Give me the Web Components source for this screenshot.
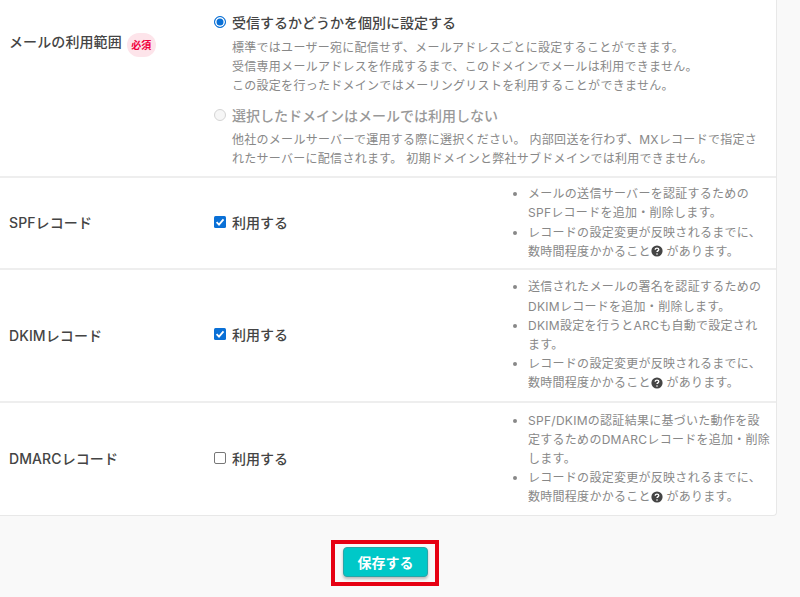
<!DOCTYPE html>
<html lang="ja">
<head>
<meta charset="utf-8">
<title>ドメイン設定</title>
<style>
  html, body { margin: 0; height: 597px; overflow: hidden; }
  body {
    background: #f9f9f9;
    font-family: Inter, "Noto Sans CJK JP", sans-serif;
    color: #444;
  }
</style>
</head>
<body>
<setting-card>
  <setting-row style="--row-height:178px" align="top">
    <span slot="label">メールの利用範囲<required-badge></required-badge></span>
    <div slot="control">
      <radio-option checked label="受信するかどうかを個別に設定する">
        標準ではユーザー宛に配信せず、メールアドレスごとに設定することができます。<br>受信専用メールアドレスを作成するまで、このドメインでメールは利用できません。<br>この設定を行ったドメインではメーリングリストを利用することができません。
      </radio-option>
      <radio-option disabled label="選択したドメインはメールでは利用しない">
        他社のメールサーバーで運用する際に選択ください。 内部回送を行わず、MXレコードで指定さ<br>れたサーバーに配信されます。 初期ドメインと弊社サブドメインでは利用できません。
      </radio-option>
    </div>
  </setting-row>
  <setting-row style="--row-height:92px">
    <span slot="label">SPFレコード</span>
    <check-option slot="control" checked>利用する</check-option>
    <note-list slot="notes">
      <li>メールの送信サーバーを認証するための<br>SPFレコードを追加・削除します。</li>
      <li>レコードの設定変更が反映されるまでに、<br>数時間程度かかること<help-icon></help-icon> があります。</li>
    </note-list>
  </setting-row>
  <setting-row style="--row-height:133px">
    <span slot="label">DKIMレコード</span>
    <check-option slot="control" checked>利用する</check-option>
    <note-list slot="notes">
      <li>送信されたメールの署名を認証するための<br>DKIMレコードを追加・削除します。</li>
      <li>DKIM設定を行うとARCも自動で設定され<br>ます。</li>
      <li>レコードの設定変更が反映されるまでに、<br>数時間程度かかること<help-icon></help-icon> があります。</li>
    </note-list>
  </setting-row>
  <setting-row style="--row-height:112px" last>
    <span slot="label">DMARCレコード</span>
    <check-option slot="control">利用する</check-option>
    <note-list slot="notes">
      <li>SPF/DKIMの認証結果に基づいた動作を設<br>定するためのDMARCレコードを追加・削除<br>します。</li>
      <li>レコードの設定変更が反映されるまでに、<br>数時間程度かかること<help-icon></help-icon> があります。</li>
    </note-list>
  </setting-row>
</setting-card>
<save-bar>保存する</save-bar>

<script>
  class SettingCard extends HTMLElement {
    constructor() {
      super();
      this.attachShadow({mode: 'open'});
      this.shadowRoot.innerHTML = `
        <style>
          :host { display: block; margin-right: 23px; }
          div {
            background: #fff;
            border-right: 1px solid #e8e8e8;
            border-bottom: 1px solid #e8e8e8;
            border-bottom-right-radius: 4px;
          }
        </style>
        <div><slot></slot></div>`;
    }
  }

  class SettingRow extends HTMLElement {
    constructor() {
      super();
      this.attachShadow({mode: 'open'});
      this.shadowRoot.innerHTML = `
        <style>
          :host {
            display: grid;
            grid-template-columns: 205px 1fr 267px;
            box-sizing: border-box;
            height: var(--row-height);
            border-bottom: 2px solid #eee;
            padding-left: 9px;
            align-items: center;
          }
          :host([last]) { border-bottom: 0; }
          .label {
            font-size: 14px;
            font-weight: 500;
            letter-spacing: .1px;
            color: #444;
            white-space: nowrap;
            margin-top: -2px;
          }
          .control { font-size: 14px; margin-top: -3px; }
          :host([align="top"]) .control {
            grid-column: 2 / 4;
            align-self: start;
            margin-top: 0;
            padding-top: 11px;
          }
          :host([align="top"]) .label { align-self: start; margin-top: 31px; }
          .notes { margin-top: -1px; white-space: nowrap; }
        </style>
        <div class="label"><slot name="label"></slot></div>
        <div class="control"><slot name="control"></slot></div>
        <div class="notes"><slot name="notes"></slot></div>`;
    }
  }

  class RequiredBadge extends HTMLElement {
    constructor() {
      super();
      this.attachShadow({mode: 'open'});
      this.shadowRoot.innerHTML = `
        <style>
          :host {
            display: inline-flex;
            align-items: center;
            justify-content: center;
            width: 29px;
            height: 24px;
            margin-left: 5px;
            vertical-align: -2px;
            border-radius: 12px;
            background: #fde4ea;
            color: #f0003c;
            font-size: 10px;
            font-weight: 700;
          }
        </style>必須`;
    }
  }

  class RadioOption extends HTMLElement {
    constructor() {
      super();
      this.attachShadow({mode: 'open'});
      this.shadowRoot.innerHTML = `
        <style>
          :host { display: block; margin-bottom: 8px; }
          .head {
            display: flex;
            align-items: center;
            gap: 6px;
            height: 22px;
            font-size: 14px;
            font-weight: 500;
            color: #444;
          }
          :host([disabled]) .head { color: #999; }
          .dot {
            box-sizing: border-box;
            width: 12px;
            height: 12px;
            border-radius: 50%;
            border: 1px solid #0a70d6;
            background: #0a70d6;
            box-shadow: inset 0 0 0 1.5px #fff;
          }
          :host([disabled]) .dot { border-color: #d4d4d4; background: #f6f6f6; box-shadow: none; }
          .text {
            margin: 5px 0 0 18px;
            font-size: 12px;
            line-height: 1.6;
            letter-spacing: .28px;
            color: #888;
          }
          :host([disabled]) .text { margin-top: 4px; }
        </style>
        <div class="head"><span class="dot"></span><span class="name"></span></div>
        <div class="text"><slot></slot></div>`;
    }
    connectedCallback() {
      this.shadowRoot.querySelector('.name').textContent = this.getAttribute('label');
    }
  }

  class CheckOption extends HTMLElement {
    constructor() {
      super();
      this.attachShadow({mode: 'open'});
      this.shadowRoot.innerHTML = `
        <style>
          :host {
            display: flex;
            align-items: center;
            gap: 6px;
            font-size: 14px;
            font-weight: 500;
            color: #444;
          }
          svg { display: block; flex: none; }
        </style>
        <svg width="12" height="12" viewBox="0 0 12 12"></svg>
        <span><slot></slot></span>`;
    }
    connectedCallback() {
      this.shadowRoot.querySelector('svg').innerHTML = this.hasAttribute('checked')
        ? '<rect width="12" height="12" rx="1.5" fill="#0a70d6"/><path d="M2.6 6.2 5 8.6 9.5 3.4" fill="none" stroke="#fff" stroke-width="1.8"/>'
        : '<rect x=".5" y=".5" width="11" height="11" rx="1.5" fill="#fff" stroke="#777"/>';
    }
  }

  class NoteList extends HTMLElement {
    constructor() {
      super();
      this.attachShadow({mode: 'open'});
      this.shadowRoot.innerHTML = `
        <style>
          :host { display: block; }
          ul { margin: 0; padding: 0 0 0 19px; }
          ::slotted(li) {
            font-size: 12px;
            line-height: 1.6;
            letter-spacing: .28px;
            color: #888;
          }
        </style>
        <ul><slot></slot></ul>`;
    }
  }

  class HelpIcon extends HTMLElement {
    constructor() {
      super();
      this.attachShadow({mode: 'open'});
      this.shadowRoot.innerHTML = `
        <style>
          :host { display: inline-block; width: 12px; height: 12px; vertical-align: -1.5px; }
          svg { display: block; }
        </style>
        <svg width="12" height="12" viewBox="0 0 12 12">
          <circle cx="6" cy="6" r="5.6" fill="#444"/>
          <path d="M4.2 4.8C4.2 3.7 5 3.1 6 3.1s1.8.6 1.8 1.5c0 1.2-1.8 1.3-1.8 2.5" fill="none" stroke="#fff" stroke-width="1.3"/>
          <circle cx="6" cy="9" r=".8" fill="#fff"/>
        </svg>`;
    }
  }

  class SaveBar extends HTMLElement {
    constructor() {
      super();
      this.attachShadow({mode: 'open'});
      this.shadowRoot.innerHTML = `
        <style>
          :host { display: flex; justify-content: center; padding: 24px 30px 0 0; }
          .mark {
            border: 4px solid #e60012;
            padding: 3px 7px 5px 8px;
          }
          button {
            display: block;
            box-sizing: border-box;
            width: 85px;
            height: 30px;
            padding: 0;
            border: 1px solid #2aa5a8;
            border-radius: 4px;
            background: #00c8c8;
            color: #fff;
            font: 700 14px Inter, "Noto Sans CJK JP", sans-serif;
            box-shadow: 0 2px 3px rgba(0,0,0,.25);
          }
        </style>
        <div class="mark"><button><slot></slot></button></div>`;
    }
  }

  customElements.define('setting-card', SettingCard);
  customElements.define('setting-row', SettingRow);
  customElements.define('required-badge', RequiredBadge);
  customElements.define('radio-option', RadioOption);
  customElements.define('check-option', CheckOption);
  customElements.define('note-list', NoteList);
  customElements.define('help-icon', HelpIcon);
  customElements.define('save-bar', SaveBar);
</script>
</body>
</html>
